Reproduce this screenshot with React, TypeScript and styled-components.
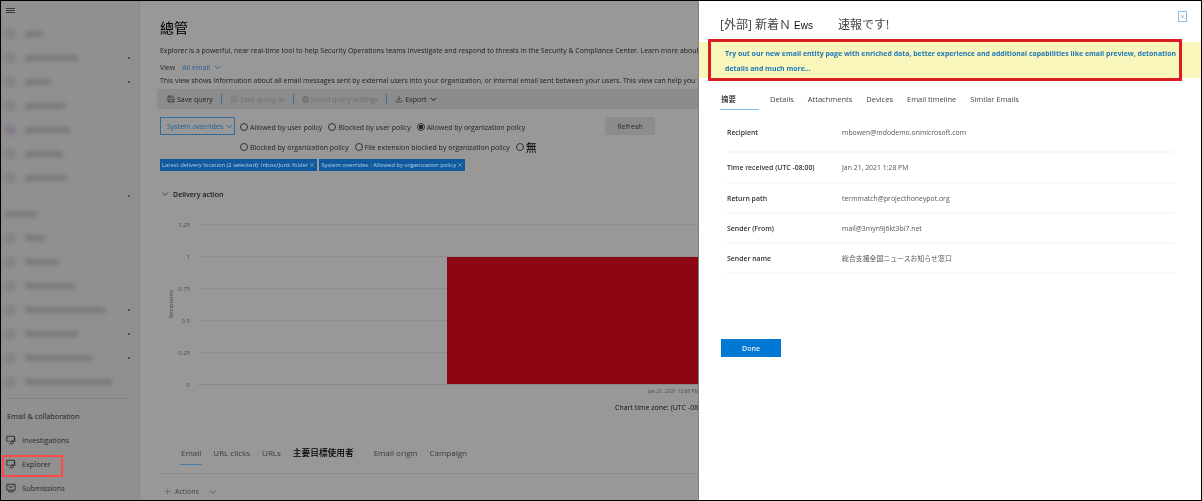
import React from 'react';
import styled, { createGlobalStyle } from 'styled-components';
import { ChevronDown, Plus, X, Save, Download } from 'lucide-react';

const FONT = `'Open Sans', 'Noto Sans CJK JP', sans-serif`;

const GlobalStyle = createGlobalStyle`
  html, body { margin: 0; padding: 0; background: #989898; }
  * { box-sizing: border-box; }
  body { font-family: ${FONT}; color: #1c1c1c; }
`;

const upperRows = [
  { width: 17 },
  { width: 53, arrow: true },
  { width: 25, arrow: true },
  { width: 40 },
  { width: 45, tint: true },
  { width: 38 },
  { width: 41 },
];
const lowerRows = [
  { width: 32, label: true },
  { width: 20 },
  { width: 33 },
  { width: 50 },
  { width: 80, arrow: true },
  { width: 53, arrow: true },
  { width: 67, arrow: true },
  { width: 87 },
];

const ExplorerIcon = () => (
  <svg width="10" height="10" viewBox="0 0 12 12" fill="none" stroke="#222" strokeWidth="1">
    <path d="M1 1.5h9v6H7" />
    <path d="M1 1.5v6h3" />
    <circle cx="7" cy="8.8" r="1.8" />
    <path d="M5.6 10.2L4.4 11.4" />
    <path d="M10.5 3v5" />
  </svg>
);

const SubmissionIcon = () => (
  <svg width="10" height="10" viewBox="0 0 12 12" fill="none" stroke="#222" strokeWidth="1">
    <path d="M1 1.5h10v7H1z" />
    <path d="M3 3.5l3 2 3-2" />
    <path d="M2.5 10.5h7" />
  </svg>
);

const ticks = [
  { label: '1.25', y: 224 },
  { label: '1', y: 256 },
  { label: '0.75', y: 288 },
  { label: '0.5', y: 320 },
  { label: '0.25', y: 352 },
  { label: '0', y: 384 },
];

const App = () => {
  return (
    <Page>
      <GlobalStyle />
      <Sidebar>
        <Hamburger>
          <svg width="9" height="6" viewBox="0 0 9 6" stroke="#3a3a3a" strokeWidth="1">
            <path d="M0 .5h9M0 2.5h9M0 4.5h9" />
          </svg>
        </Hamburger>
        {upperRows.map((row, i) => (
          <BlurRow key={i}>
            <BlurIcon $tint={row.tint} />
            <BlurText style={{ width: row.width }} />
            {row.arrow ? <ArrowDot /> : null}
          </BlurRow>
        ))}
        <BlurGap>
          <ArrowDot />
        </BlurGap>
        {lowerRows.map((row, i) => (
          <BlurRow key={i}>
            {row.label ? null : <BlurIcon />}
            <BlurText style={{ width: row.width }} />
            {row.arrow ? <ArrowDot /> : null}
          </BlurRow>
        ))}
        <SideDivider />
        <SideHeading>Email &amp; collaboration</SideHeading>
        <SideItem>
          <ExplorerIcon />
          Investigations
        </SideItem>
        <SideItem $marked>
          <ExplorerIcon />
          Explorer
        </SideItem>
        <SideItem>
          <SubmissionIcon />
          Submissions
        </SideItem>
      </Sidebar>

      <Main>
        <Title>總管</Title>
        <Description>
          Explorer is a powerful, near real-time tool to help Security Operations teams investigate and respond to threats in the Security &amp; Compliance Center. Learn more about
        </Description>
        <ViewRow>
          View <ViewLink>All email</ViewLink>
          <ChevronDown size={9} strokeWidth={2.4} color="#2a5f8f" />
        </ViewRow>
        <Description $tight>
          This view shows information about all email messages sent by external users into your organization, or internal email sent between your users. This view can help you find
        </Description>

        <Toolbar>
          <ToolButton>
            <Save size={8} strokeWidth={1.8} />
            Save query
          </ToolButton>
          <ToolSep />
          <ToolButton $disabled>
            <Save size={8} strokeWidth={1.4} />
            Save query as
          </ToolButton>
          <ToolSep />
          <ToolButton $disabled>
            <RadioDot />
            Saved query settings
          </ToolButton>
          <ToolSep />
          <ToolButton>
            <Download size={8} strokeWidth={1.6} />
            Export
            <ChevronDown size={9} strokeWidth={2.4} color="#111" />
          </ToolButton>
        </Toolbar>

        <FilterArea>
          <FilterSelect>
            System overrides
            <ChevronDown size={9} strokeWidth={2.4} color="#1e5f92" />
          </FilterSelect>
          <FilterOptions>
            <OptionRow>
              <Radio label="Allowed by user policy" />
              <Radio label="Blocked by user policy" />
              <Radio label="Allowed by organization policy" checked />
            </OptionRow>
            <OptionRow>
              <Radio label="Blocked by organization policy" />
              <Radio label="File extension blocked by organization policy" />
              <Radio label="無" cjk />
            </OptionRow>
          </FilterOptions>
          <RefreshButton>Refresh</RefreshButton>
        </FilterArea>

        <TagRow>
          <Tag>
            Latest delivery location (2 selected): Inbox/Junk folder
            <X size={8} strokeWidth={1.2} color="#dfe9f2" />
          </Tag>
          <Tag>
            System overrides : Allowed by organization policy
            <X size={8} strokeWidth={1.2} color="#dfe9f2" />
          </Tag>
        </TagRow>

        <SectionHead>
          <ChevronDown size={10} strokeWidth={1.6} color="#1a1a1a" />
          Delivery action
        </SectionHead>

        <Chart width="558" height="182" viewBox="140 218 558 182">
          {ticks.map(t => (
            <g key={t.label}>
              <line x1="198" x2="698" y1={t.y + 0.5} y2={t.y + 0.5} stroke={t.label === '0' ? '#84898f' : '#8f8f8f'} />
              <text x="190" y={t.y + 2.5} fontSize="6" fill="#4c4c4c" textAnchor="end">
                {t.label}
              </text>
            </g>
          ))}
          <rect x="447" y="257" width="251" height="127" fill="#8c0712" />
          <text x="0" y="0" fontSize="6" fill="#4c4c4c" textAnchor="middle" transform="translate(173 304) rotate(-90)">
            Recipients
          </text>
          <text x="648" y="393" fontSize="5" fill="#4c4c4c">
            Jan 21, 2021 12:00 PM
          </text>
        </Chart>

        <ChartZone>Chart time zone: (UTC -08:00)</ChartZone>

        <MainTabs>
          <MainTab $active>Email</MainTab>
          <MainTab>URL clicks</MainTab>
          <MainTab>URLs</MainTab>
          <MainTab $cjk>主要目標使用者</MainTab>
          <MainTab>Email origin</MainTab>
          <MainTab>Campaign</MainTab>
        </MainTabs>
        <ActionsRow>
          <Plus size={9} strokeWidth={1} color="#444" />
          Actions
          <ChevronDown size={10} strokeWidth={1.4} color="#333" />
        </ActionsRow>
      </Main>

      <Panel>
        <PanelHead>
          <PanelTitle>
            [外部] 新着Ｎ <Ews>Ews</Ews>
            <TitleGap />
            速報です!
          </PanelTitle>
          <CloseBox>
            <X size={9} strokeWidth={1} color="#333" />
          </CloseBox>
        </PanelHead>

        <Notice>
          <NoticeMark>
            Try out our new email entity page with enriched data, better experience and additional capabilities like email preview, detonation details and much more...
          </NoticeMark>
        </Notice>

        <PanelTabs>
          <PanelTab $active>摘要</PanelTab>
          <PanelTab>Details</PanelTab>
          <PanelTab>Attachments</PanelTab>
          <PanelTab>Devices</PanelTab>
          <PanelTab>Email timeline</PanelTab>
          <PanelTab>Similar Emails</PanelTab>
        </PanelTabs>

        <Fields>
          <FieldRow $height={43} $pad={3}>
            <FieldName>Recipient</FieldName>
            <FieldValue>mbowen@mdodemo.onmicrosoft.com</FieldValue>
          </FieldRow>
          <FieldRow $height={31}>
            <FieldName>Time received (UTC -08:00)</FieldName>
            <FieldValue>Jan 21, 2021 1:28 PM</FieldValue>
          </FieldRow>
          <FieldRow>
            <FieldName>Return path</FieldName>
            <FieldValue>termmatch@projecthoneypot.org</FieldValue>
          </FieldRow>
          <FieldRow>
            <FieldName>Sender (From)</FieldName>
            <FieldValue>mail@3myn9j6kt3bi7.net</FieldValue>
          </FieldRow>
          <FieldRow>
            <FieldName>Sender name</FieldName>
            <FieldValue>総合支援全国ニュースお知らせ窓口</FieldValue>
          </FieldRow>
        </Fields>

        <DoneButton>Done</DoneButton>
      </Panel>
    </Page>
  );
};

const Radio = ({ label, checked, cjk }: { label: string; checked?: boolean; cjk?: boolean }) => (
  <RadioLabel $cjk={cjk}>
    <RadioCircle $checked={checked} />
    {label}
  </RadioLabel>
);

export default App;

const Page = styled.div`
  width: 1202px;
  height: 501px;
  display: flex;
  overflow: hidden;
  border: 1px solid #000;
  background: #989898;
`;

const Sidebar = styled.aside`
  width: 139px;
  flex: none;
  background: #909090;
  border-right: 1px solid #8b8b8b;
  display: flex;
  flex-direction: column;
  padding-left: 4px;
`;

const Hamburger = styled.div`
  height: 22px;
  padding: 7px 0 0 1px;
  line-height: 0;
`;

const BlurRow = styled.div`
  height: 24px;
  flex: none;
  display: flex;
  align-items: center;
  gap: 10px;
`;

const BlurIcon = styled.div<{ $tint?: boolean }>`
  width: 10px;
  height: 8px;
  background: ${p => (p.$tint ? '#84768c' : '#808080')};
  filter: blur(2.5px);
`;

const BlurText = styled.div`
  height: 6px;
  background: #7a7a7a;
  filter: blur(2.2px);
`;

const ArrowDot = styled.span`
  width: 2px;
  height: 2px;
  margin-left: auto;
  margin-right: 9px;
  background: #555;
`;

const BlurGap = styled.div`
  height: 12px;
  flex: none;
  display: flex;
  align-items: flex-start;
  padding-top: 5px;
`;

const SideDivider = styled.div`
  flex: none;
  height: 1px;
  margin: 4px 9px 0 2px;
  background: #828282;
`;

const SideHeading = styled.div`
  height: 24px;
  flex: none;
  margin-top: 5px;
  padding-left: 2px;
  display: flex;
  align-items: center;
  font-size: 7.3px;
  color: #1e1e1e;
`;

const SideItem = styled.div<{ $marked?: boolean }>`
  position: relative;
  height: 24px;
  flex: none;
  display: flex;
  align-items: center;
  gap: 6px;
  padding-left: 1px;
  font-size: 7.3px;
  color: #2a2a2a;
  ${p =>
    p.$marked
      ? `&::after {
          content: '';
          position: absolute;
          left: -3px;
          top: 3px;
          width: 57px;
          height: 18px;
          border: 2px solid #ff4a4a;
        }`
      : ''}
`;

const Main = styled.main`
  width: 558px;
  flex: none;
  overflow: hidden;
  padding-left: 20px;
  filter: blur(0.25px);
`;

const Title = styled.h1`
  margin: 0;
  height: 39px;
  padding-top: 16px;
  font-size: 14px;
  line-height: 20px;
  font-weight: 400;
  color: #000;
  font-family: 'Noto Sans CJK TC', sans-serif;
`;

const Description = styled.div<{ $tight?: boolean }>`
  height: ${p => (p.$tight ? 13 : 17)}px;
  line-height: ${p => (p.$tight ? 13 : 22)}px;
  font-size: 6.95px;
  white-space: nowrap;
  color: #1c1c1c;
`;

const ViewRow = styled.div`
  height: 13px;
  margin-top: 4px;
  display: flex;
  align-items: center;
  gap: 3px;
  font-size: 7px;
  color: #2a2a2a;
`;

const ViewLink = styled.span`
  margin-left: 4px;
  color: #2a5f8f;
`;

const Toolbar = styled.div`
  height: 20px;
  margin: 2px 0 0 -3px;
  padding-left: 10px;
  display: flex;
  align-items: center;
  gap: 8px;
  background: #8c8c8c;
`;

const ToolButton = styled.div<{ $disabled?: boolean }>`
  display: flex;
  align-items: center;
  gap: 2px;
  font-size: 7px;
  white-space: nowrap;
  color: ${p => (p.$disabled ? '#6e6e6e' : '#222')};
`;

const ToolSep = styled.div`
  width: 1px;
  height: 10px;
  background: #3d6f9c;
`;

const RadioDot = styled.span`
  width: 7px;
  height: 7px;
  border-radius: 50%;
  background: #7a7a7a;
  border: 1px solid #6e6e6e;
`;

const FilterArea = styled.div`
  display: flex;
  align-items: flex-start;
  margin-top: 8px;
  height: 42px;
`;

const FilterSelect = styled.div`
  width: 75px;
  height: 18px;
  flex: none;
  display: flex;
  align-items: center;
  gap: 2px;
  padding-left: 6px;
  border: 1px solid #2f6d9f;
  font-size: 7px;
  white-space: nowrap;
  color: #1e5f92;
`;

const FilterOptions = styled.div`
  width: 370px;
  flex: none;
  padding-left: 5px;
`;

const OptionRow = styled.div`
  height: 20px;
  display: flex;
  align-items: center;
  gap: 6px;
`;

const RadioLabel = styled.div<{ $cjk?: boolean }>`
  display: flex;
  align-items: center;
  gap: 2px;
  white-space: nowrap;
  font-size: ${p => (p.$cjk ? 11 : 7)}px;
  color: ${p => (p.$cjk ? '#000' : '#222')};
`;

const RadioCircle = styled.span<{ $checked?: boolean }>`
  width: 8px;
  height: 8px;
  flex: none;
  border-radius: 50%;
  border: 1px solid #333;
  background: ${p => (p.$checked ? 'radial-gradient(circle, #222 0 2px, transparent 2.4px)' : 'transparent')};
`;

const RefreshButton = styled.div`
  width: 50px;
  height: 18px;
  flex: none;
  display: flex;
  align-items: center;
  justify-content: center;
  background: #8c8c8c;
  font-size: 7px;
  color: #2a2a2a;
`;

const TagRow = styled.div`
  height: 12px;
  display: flex;
  gap: 2px;
`;

const Tag = styled.div`
  height: 12px;
  display: flex;
  align-items: center;
  padding: 0 1px 0 2px;
  background: #0f5a9e;
  font-size: 5.9px;
  white-space: nowrap;
  color: #b9cfe2;
`;

const SectionHead = styled.div`
  height: 14px;
  margin-top: 16px;
  display: flex;
  align-items: center;
  gap: 3px;
  font-size: 7px;
  font-weight: 600;
  color: #1a1a1a;
`;

const Chart = styled.svg`
  display: block;
  margin: 17px 0 0 -20px;
  font-family: ${FONT};
`;

const ChartZone = styled.div`
  height: 14px;
  margin: 1px 0 0 455px;
  font-size: 7px;
  line-height: 14px;
  white-space: nowrap;
  color: #111;
`;

const MainTabs = styled.div`
  height: 30px;
  margin-top: 29px;
  padding-left: 20px;
  display: flex;
  gap: 10px;
  border-bottom: 1px solid #8d8d8d;
`;

const MainTab = styled.div<{ $active?: boolean; $cjk?: boolean }>`
  height: 21px;
  line-height: 18px;
  padding: 0 1px;
  font-size: ${p => (p.$cjk ? 8.7 : 8)}px;
  white-space: nowrap;
  color: ${p => (p.$cjk ? '#000' : '#3a3a3a')};
  ${p => (p.$cjk ? 'margin-right: 8px; font-weight: 500;' : '')}
  border-bottom: ${p => (p.$active ? '1px solid #4a7da6' : 'none')};
`;

const ActionsRow = styled.div`
  height: 26px;
  display: flex;
  align-items: center;
  gap: 3px;
  padding: 9px 0 0 3px;
  font-size: 7px;
  color: #444;
  svg:last-child {
    margin-left: 6px;
  }
`;

const Panel = styled.section`
  flex: 1;
  min-width: 0;
  background: #fff;
  border-left: 1px solid #808080;
  filter: blur(0.2px);
`;

const PanelHead = styled.header`
  height: 38px;
  display: flex;
  align-items: flex-start;
  justify-content: space-between;
  padding: 10px 14px 0 21px;
`;

const PanelTitle = styled.div`
  display: flex;
  align-items: baseline;
  height: 25px;
  white-space: pre;
  font-size: 12px;
  line-height: 25px;
  margin-top: 1px;
  color: #444;
`;

const Ews = styled.span`
  font-family: 'Liberation Sans', sans-serif;
  font-size: 10px;
  color: #111;
`;

const TitleGap = styled.span`
  width: 25px;
`;

const CloseBox = styled.div`
  width: 9px;
  height: 11px;
  display: flex;
  align-items: center;
  justify-content: center;
  border: 1px solid #8cc0e8;
`;

const Notice = styled.div`
  height: 36px;
  margin-top: 3px;
  background: #f8f6bb;
  padding-left: 9px;
`;

const NoticeMark = styled.div`
  width: 474px;
  height: 42px;
  position: relative;
  top: -3px;
  padding: 4px 2px 0 14px;
  border: 3px solid #d81e22;
  font-size: 6.95px;
  line-height: 15px;
  font-weight: 700;
  color: #1f77b8;
`;

const PanelTabs = styled.nav`
  height: 32px;
  padding: 14px 0 0 21px;
  display: flex;
`;

const PanelTab = styled.div<{ $active?: boolean }>`
  height: 18px;
  padding: 0 1px;
  margin-right: ${p => (p.$active ? 10 : 12)}px;
  min-width: ${p => (p.$active ? '39px' : '0')};
  font-size: 7.5px;
  line-height: 14px;
  white-space: nowrap;
  color: ${p => (p.$active ? '#000' : '#444')};
  border-bottom: ${p => (p.$active ? '1px solid #7cc0ef' : 'none')};
`;

const Fields = styled.div`
  margin: 0 27px 0 28px;
`;

const FieldRow = styled.div<{ $height?: number; $pad?: number }>`
  height: ${p => p.$height ?? 30}px;
  padding-top: ${p => p.$pad ?? 0}px;
  display: flex;
  align-items: center;
  border-bottom: 2px solid #f7f7f7;
  font-size: 6.9px;
`;

const FieldName = styled.div`
  width: 115px;
  flex: none;
  font-weight: 600;
  color: #333;
  white-space: nowrap;
`;

const FieldValue = styled.div`
  color: #555;
  white-space: nowrap;
`;

const DoneButton = styled.button`
  display: block;
  width: 60px;
  height: 18px;
  margin: 65px 0 0 22px;
  padding: 0;
  border: 0;
  background: #0078d4;
  color: #e4f0fa;
  font-family: ${FONT};
  font-size: 7px;
  font-weight: 600;
`;
